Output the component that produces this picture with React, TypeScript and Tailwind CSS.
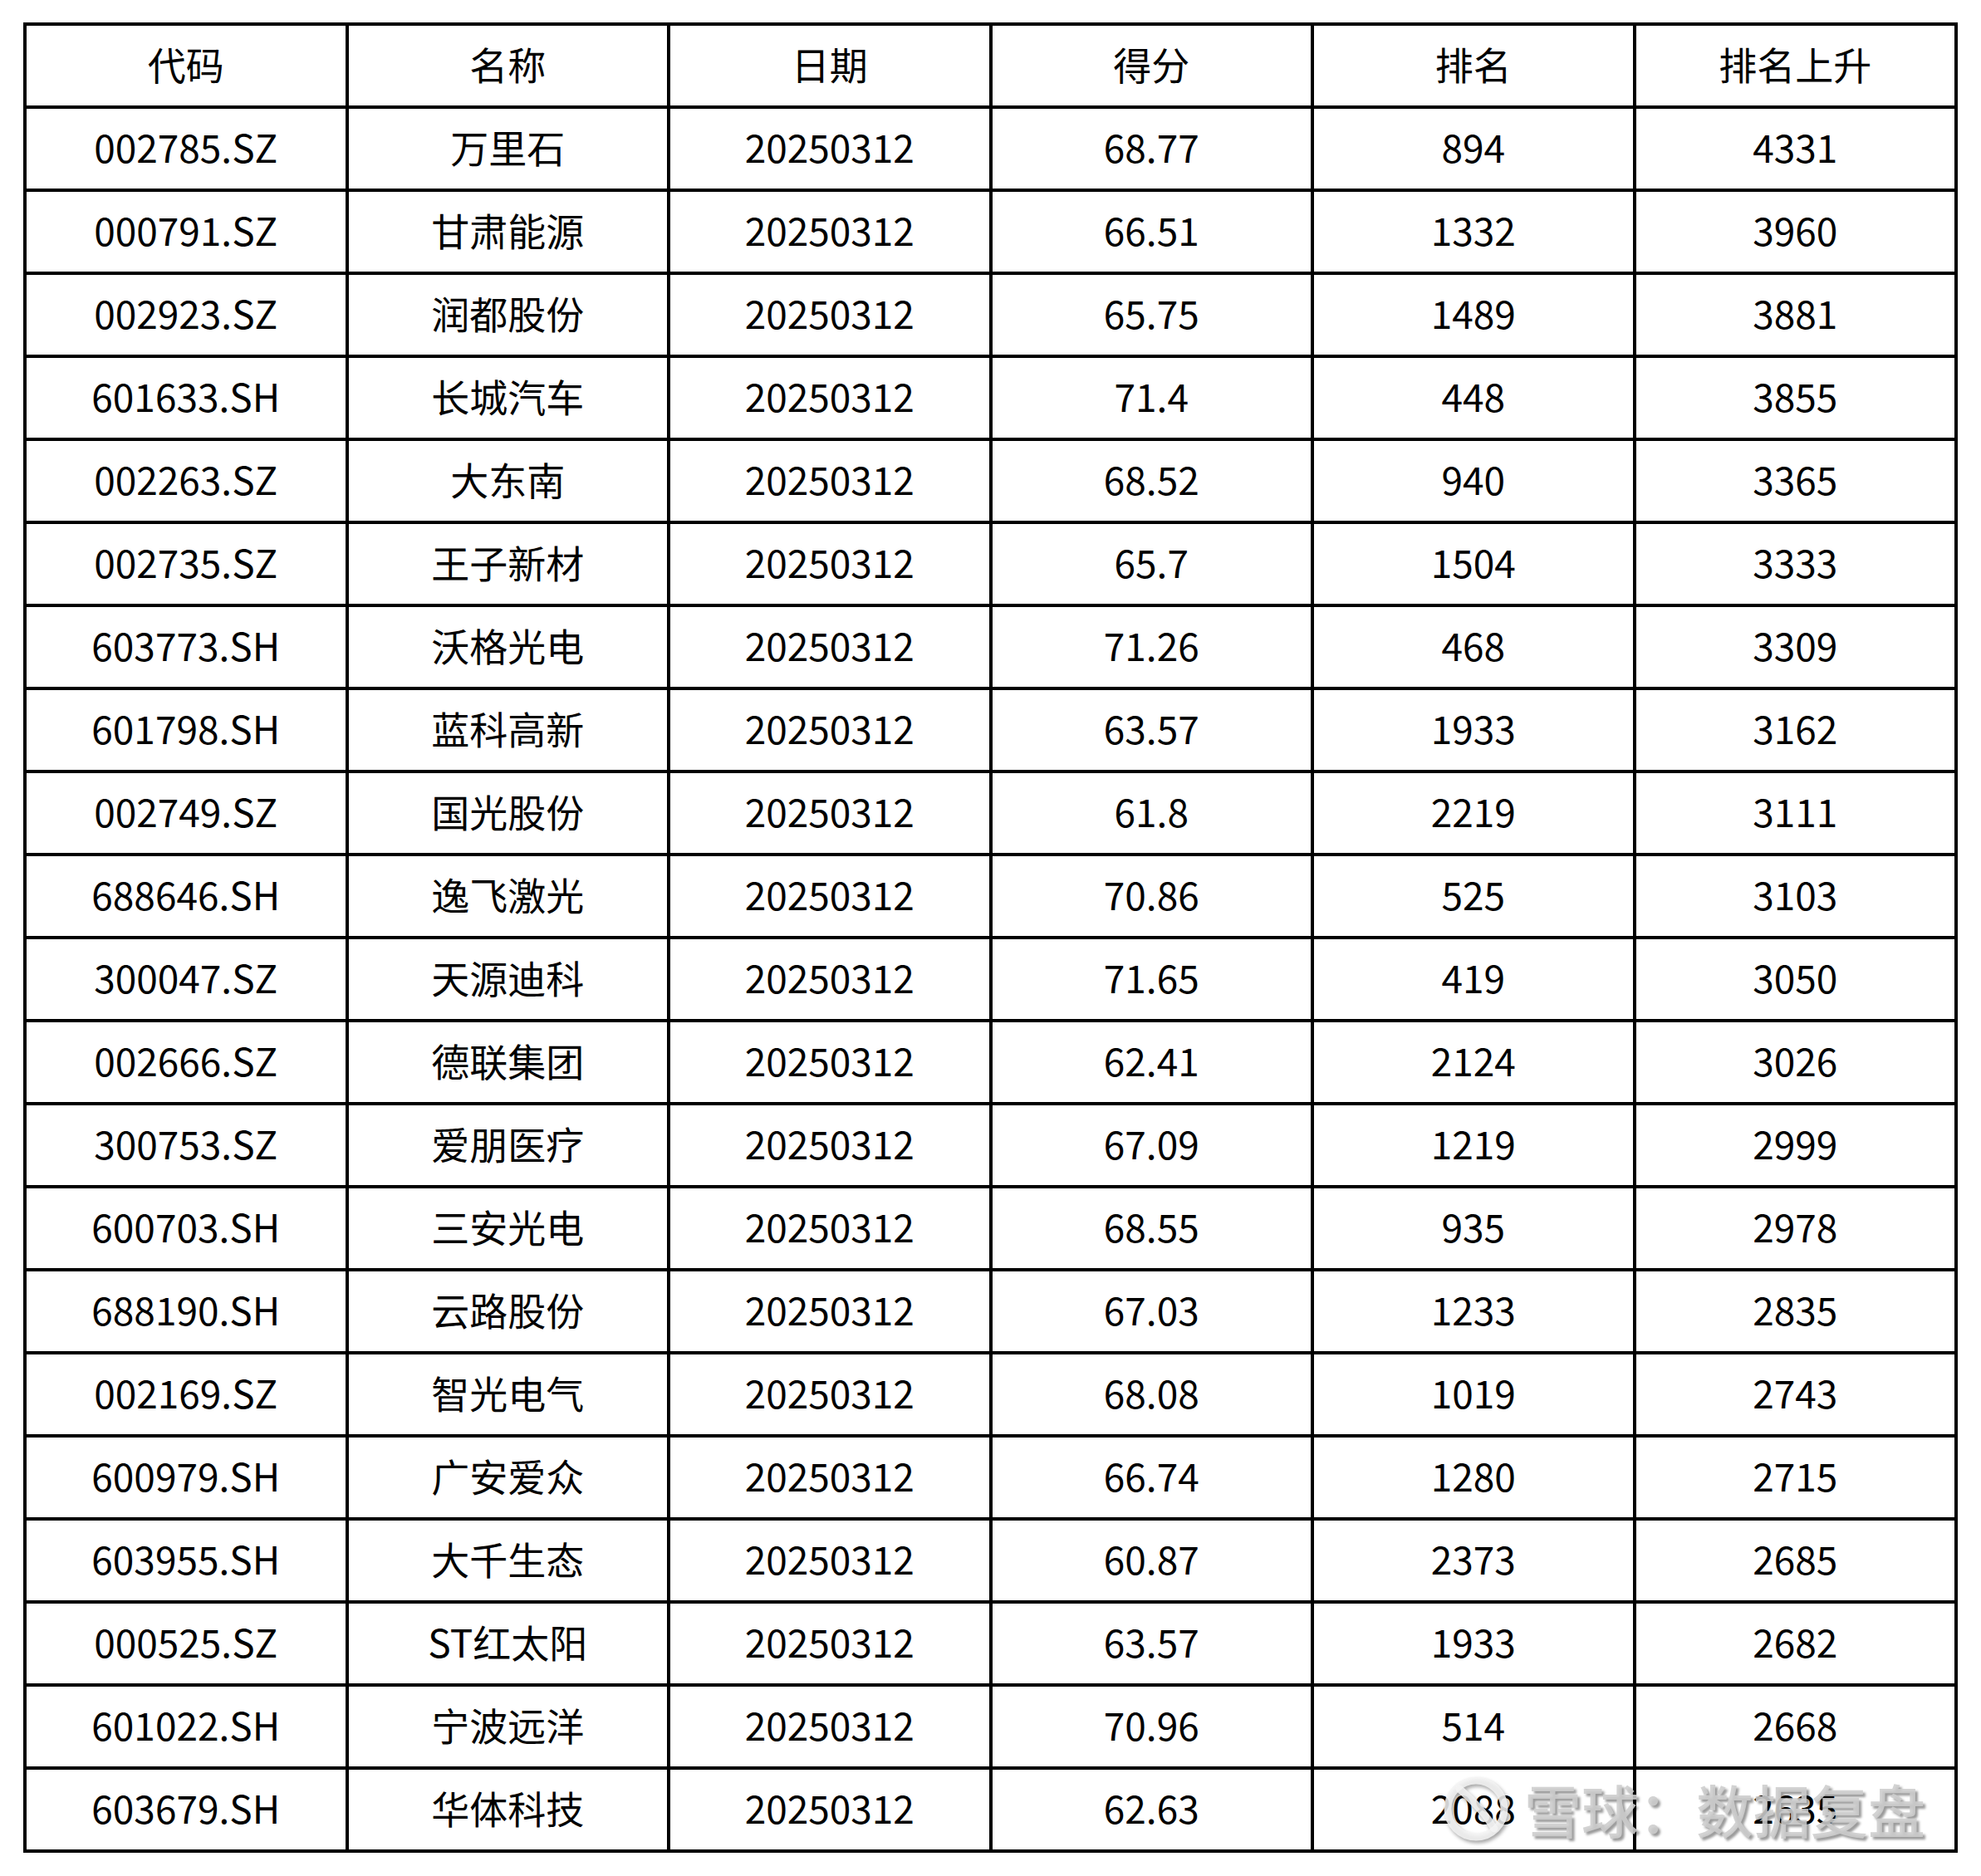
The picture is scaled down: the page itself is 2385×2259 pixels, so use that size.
import React from "react";

const headers = ["代码", "名称", "日期", "得分", "排名", "排名上升"];

const rows: string[][] = [
  ["002785.SZ", "万里石", "20250312", "68.77", "894", "4331"],
  ["000791.SZ", "甘肃能源", "20250312", "66.51", "1332", "3960"],
  ["002923.SZ", "润都股份", "20250312", "65.75", "1489", "3881"],
  ["601633.SH", "长城汽车", "20250312", "71.4", "448", "3855"],
  ["002263.SZ", "大东南", "20250312", "68.52", "940", "3365"],
  ["002735.SZ", "王子新材", "20250312", "65.7", "1504", "3333"],
  ["603773.SH", "沃格光电", "20250312", "71.26", "468", "3309"],
  ["601798.SH", "蓝科高新", "20250312", "63.57", "1933", "3162"],
  ["002749.SZ", "国光股份", "20250312", "61.8", "2219", "3111"],
  ["688646.SH", "逸飞激光", "20250312", "70.86", "525", "3103"],
  ["300047.SZ", "天源迪科", "20250312", "71.65", "419", "3050"],
  ["002666.SZ", "德联集团", "20250312", "62.41", "2124", "3026"],
  ["300753.SZ", "爱朋医疗", "20250312", "67.09", "1219", "2999"],
  ["600703.SH", "三安光电", "20250312", "68.55", "935", "2978"],
  ["688190.SH", "云路股份", "20250312", "67.03", "1233", "2835"],
  ["002169.SZ", "智光电气", "20250312", "68.08", "1019", "2743"],
  ["600979.SH", "广安爱众", "20250312", "66.74", "1280", "2715"],
  ["603955.SH", "大千生态", "20250312", "60.87", "2373", "2685"],
  ["000525.SZ", "ST红太阳", "20250312", "63.57", "1933", "2682"],
  ["601022.SH", "宁波远洋", "20250312", "70.96", "514", "2668"],
  ["603679.SH", "华体科技", "20250312", "62.63", "2088", "2635"],
];

const Cell = ({ text }: { text: string }) => (
  <div className="flex h-[96px] items-center justify-center bg-white pb-[5px] text-[46px] text-black">
    {text}
  </div>
);

// watermark sits over the last row, like the source image
const Watermark = () => (
  <div className="pointer-events-none absolute left-[1731px] top-[2136px] flex items-center">
    <svg
      width="92"
      height="84"
      viewBox="0 0 92 84"
      className="mr-[12px] drop-shadow-[2px_3px_2px_rgba(0,0,0,0.4)]"
    >
      <circle cx="46" cy="42" r="34" fill="none" stroke="rgba(245,245,245,0.85)" strokeWidth="9" />
      <path
        d="M26 18 C 40 30, 56 46, 68 66"
        fill="none"
        stroke="rgba(245,245,245,0.85)"
        strokeWidth="9"
        strokeLinecap="round"
      />
    </svg>
    <span className="text-[69px] font-medium leading-none text-[rgba(205,205,205,0.88)] [text-shadow:3px_3px_3px_rgba(0,0,0,0.4)]">
      雪球：数据复盘
    </span>
  </div>
);

export default function App() {
  return (
    <div
      className="relative h-[2259px] w-[2385px] bg-white"
      style={{ fontFamily: '"Noto Sans CJK SC", "Noto Sans", sans-serif' }}
    >
      <div className="pl-[28px] pt-[27px]">
        <div className="grid w-[2329px] grid-cols-6 gap-[4px] bg-black p-[4px]">
          {headers.map((h) => (
            <Cell key={h} text={h} />
          ))}
          {rows.map((r) => r.map((c, i) => <Cell key={r[0] + i} text={c} />))}
        </div>
      </div>
      <Watermark />
    </div>
  );
}
